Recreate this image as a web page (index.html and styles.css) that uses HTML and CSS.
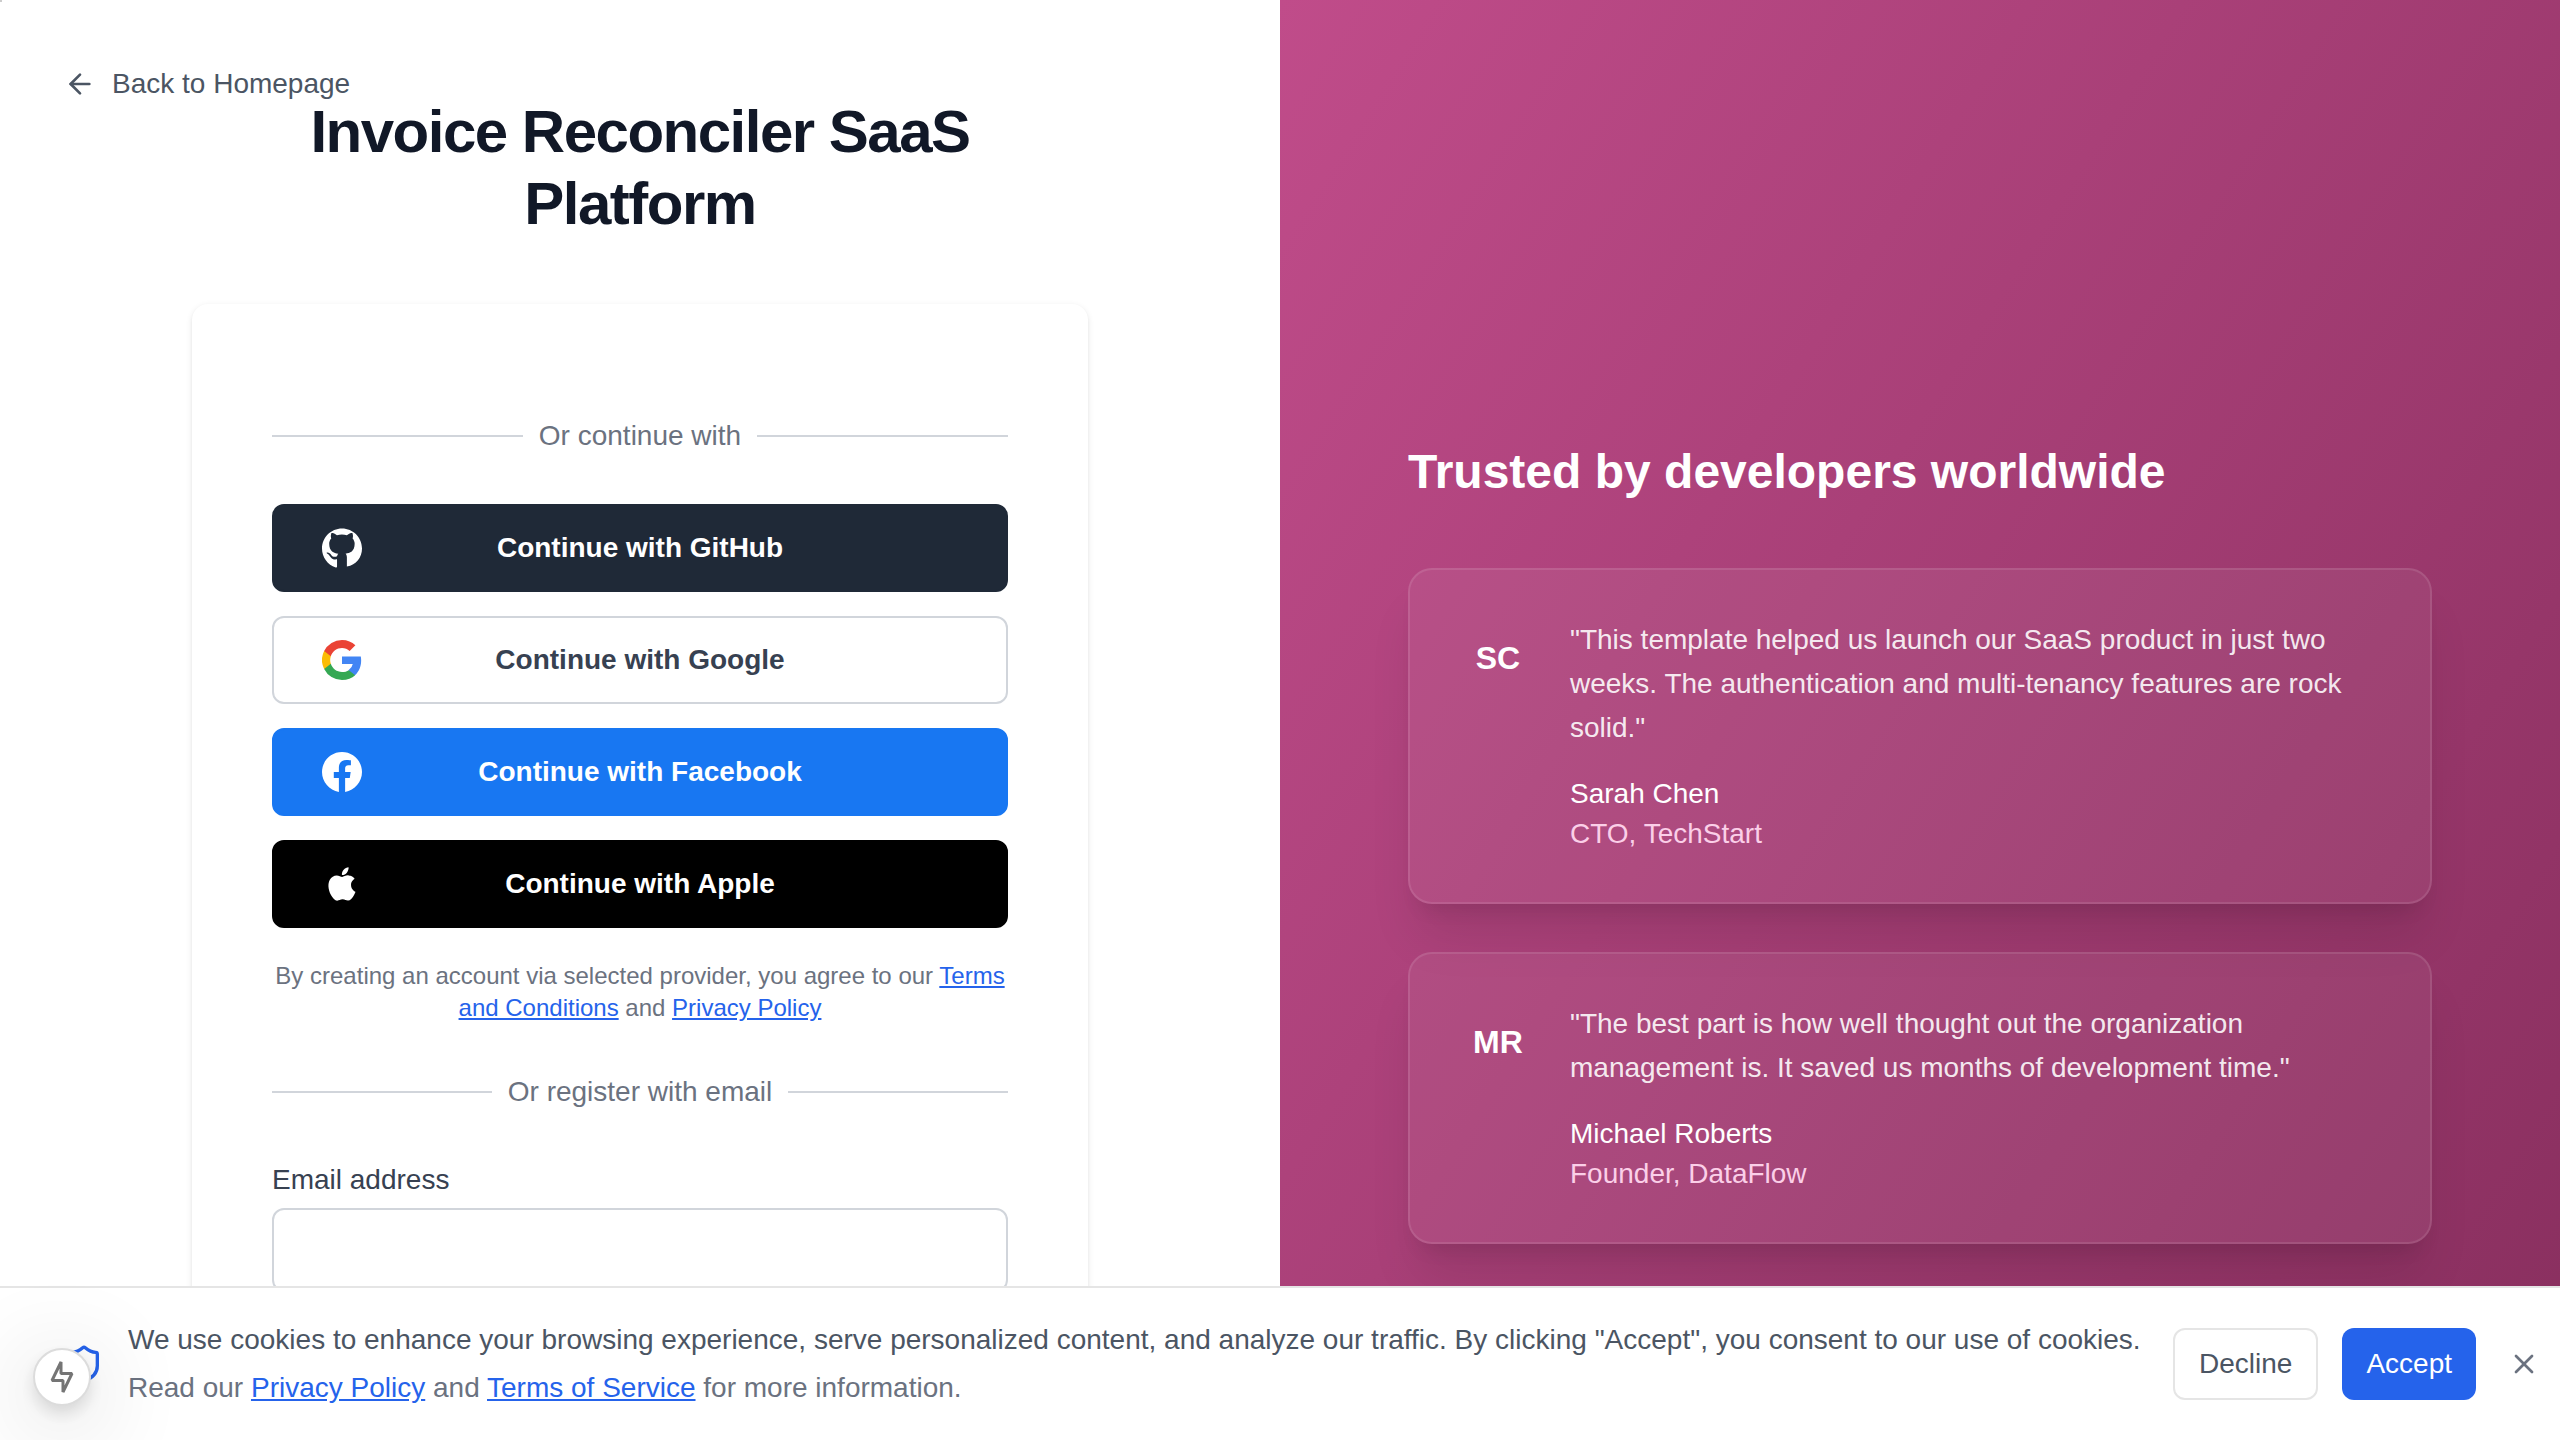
FILE: index.html
```html
<!DOCTYPE html>
<html lang="en">
<head>
<meta charset="utf-8">
<meta name="viewport" content="width=device-width, initial-scale=1">
<title>Invoice Reconciler SaaS Platform</title>
<link rel="stylesheet" href="styles.css">
</head>
<body>
<div class="page">
  <main class="signup">
    <a class="back" href="#">
      <svg class="back-icon" viewBox="0 0 24 24" fill="none" stroke="currentColor" stroke-width="2" stroke-linecap="round" stroke-linejoin="round" aria-hidden="true"><path d="m12 19-7-7 7-7"/><path d="M19 12H5"/></svg>
      Back to Homepage
    </a>
    <h1 class="title">Invoice Reconciler SaaS Platform</h1>
    <section class="card">
      <div class="divider"><span>Or continue with</span></div>
      <div class="providers">
        <button class="provider github" type="button">
          <svg class="provider-icon" viewBox="0 0 24 24" fill="currentColor" aria-hidden="true"><path d="M12 .297c-6.63 0-12 5.373-12 12 0 5.303 3.438 9.8 8.205 11.385.6.113.82-.258.82-.577v-4.3c-1.800.3-3-.2-3.800-1.300-.6-.9-1.200-1.700-2-2.100-.4-.2-.9-.6-.1-.7 1-.1 1.700.5 2.300 1.300.9 1.400 2.200 1.600 3.600 1 .108-.776.417-1.305.76-1.605-2.665-.3-5.466-1.332-5.466-5.93 0-1.31.465-2.38 1.235-3.22-.135-.303-.54-1.523.105-3.176 0 0 1.005-.322 3.3 1.23.96-.267 1.98-.399 3-.405 1.02.006 2.04.138 3 .405 2.28-1.552 3.285-1.23 3.285-1.23.645 1.653.24 2.873.12 3.176.765.84 1.23 1.91 1.23 3.22 0 4.61-2.805 5.625-5.475 5.92.42.36.81 1.096.81 2.22v5.506C20.565 22.092 24 17.592 24 12.297c0-6.627-5.373-12-12-12"/></svg>
          <span class="provider-name">Continue with GitHub</span>
        </button>
        <button class="provider google" type="button">
          <svg class="provider-icon" viewBox="0 0 24 24" aria-hidden="true"><path fill="#4285F4" d="M23.49 12.275c0-.813-.073-1.595-.208-2.346H12v4.437h6.447a5.51 5.51 0 0 1-2.39 3.616v3.006h3.871c2.265-2.086 3.562-5.158 3.562-8.713z"/><path fill="#34A853" d="M12 24c3.24 0 5.956-1.075 7.928-2.912l-3.871-3.006c-1.073.72-2.445 1.145-4.057 1.145-3.126 0-5.772-2.111-6.716-4.948H1.282v3.104A11.995 11.995 0 0 0 12 24z"/><path fill="#FBBC05" d="M5.284 14.279a7.21 7.21 0 0 1 0-4.558V6.617H1.282a12.01 12.01 0 0 0 0 10.766z"/><path fill="#EA4335" d="M12 4.773c1.762 0 3.344.606 4.587 1.795l3.441-3.44C17.951 1.19 15.235 0 12 0A11.995 11.995 0 0 0 1.282 6.617l4.002 3.104C6.228 6.884 8.874 4.773 12 4.773z"/></svg>
          <span class="provider-name">Continue with Google</span>
        </button>
        <button class="provider facebook" type="button">
          <svg class="provider-icon" viewBox="0 0 24 24" fill="currentColor" aria-hidden="true"><path d="M24 12.073c0-6.627-5.373-12-12-12s-12 5.373-12 12c0 5.99 4.388 10.954 10.125 11.854v-8.385H7.078v-3.47h3.047V9.43c0-3.007 1.792-4.669 4.533-4.669 1.312 0 2.686.235 2.686.235v2.953H15.83c-1.491 0-1.956.925-1.956 1.874v2.25h3.328l-.532 3.47h-2.796v8.385C19.612 23.027 24 18.062 24 12.073z"/></svg>
          <span class="provider-name">Continue with Facebook</span>
        </button>
        <button class="provider apple" type="button">
          <svg class="provider-icon" viewBox="0 0 24 24" fill="currentColor" aria-hidden="true"><path d="M18.71 19.5c-.83 1.24-1.71 2.45-3.05 2.47-1.34.03-1.77-.79-3.29-.79-1.53 0-2 .77-3.27.82-1.31.05-2.3-1.32-3.14-2.53C4.25 17 2.94 12.45 4.7 9.39c.87-1.52 2.43-2.48 4.12-2.51 1.28-.02 2.5.87 3.29.87.78 0 2.26-1.07 3.81-.91.65.03 2.47.26 3.64 1.98-.09.06-2.17 1.28-2.15 3.81.03 3.02 2.65 4.03 2.68 4.04-.03.07-.42 1.44-1.38 2.83M13 3.5c.73-.83 1.94-1.46 2.94-1.5.13 1.17-.34 2.35-1.04 3.19-.69.85-1.83 1.51-2.95 1.42-.15-1.15.41-2.35 1.05-3.11z"/></svg>
          <span class="provider-name">Continue with Apple</span>
        </button>
      </div>
      <p class="terms">By creating an account via selected provider, you agree to our <a href="#">Terms and Conditions</a> and <a href="#">Privacy Policy</a></p>
      <div class="divider"><span>Or register with email</span></div>
      <form class="form">
        <label class="label" for="email">Email address</label>
        <input class="input" id="email" type="email" autocomplete="email">
      </form>
    </section>
  </main>

  <aside class="praise">
    <h2 class="praise-title">Trusted by developers worldwide</h2>
    <div class="quotes">
      <article class="quote">
        <div class="avatar">SC</div>
        <div class="quote-body">
          <p class="quote-text">"This template helped us launch our SaaS product in just two weeks. The authentication and multi-tenancy features are rock solid."</p>
          <p class="author">Sarah Chen</p>
          <p class="role">CTO, TechStart</p>
        </div>
      </article>
      <article class="quote">
        <div class="avatar">MR</div>
        <div class="quote-body">
          <p class="quote-text">"The best part is how well thought out the organization management is. It saved us months of development time."</p>
          <p class="author">Michael Roberts</p>
          <p class="role">Founder, DataFlow</p>
        </div>
      </article>
    </div>
  </aside>
</div>

<div class="cookies">
  <svg class="shield" viewBox="0 0 24 24" fill="none" stroke="currentColor" stroke-width="2" stroke-linecap="round" stroke-linejoin="round" aria-hidden="true"><path d="M20 13c0 5-3.500 7.500-7.660 8.950a1 1 0 0 1-.670-.010C7.500 20.500 4 18 4 13V6a1 1 0 0 1 1-1c2 0 4.500-1.200 6.240-2.720a1.170 1.170 0 0 1 1.520 0C14.510 3.810 17 5 19 5a1 1 0 0 1 1 1z"/></svg>
  <div class="cookies-text">
    <p class="cookies-main">We use cookies to enhance your browsing experience, serve personalized content, and analyze our traffic. By clicking "Accept", you consent to our use of cookies.</p>
    <p class="cookies-more">Read our <a href="#">Privacy Policy</a> and <a href="#">Terms of Service</a> for more information.</p>
  </div>
  <div class="cookies-actions">
    <button class="btn decline" type="button">Decline</button>
    <button class="btn accept" type="button">Accept</button>
    <button class="close" type="button" aria-label="Close">
      <svg class="close-icon" viewBox="0 0 24 24" fill="none" stroke="currentColor" stroke-width="2" stroke-linecap="round" stroke-linejoin="round" aria-hidden="true"><path d="M18 6 6 18"/><path d="m6 6 12 12"/></svg>
    </button>
  </div>
</div>

<button class="devtools" type="button" aria-label="Developer tools">
  <svg class="bolt" viewBox="0 0 24 32" fill="none" stroke="currentColor" stroke-width="3" stroke-linejoin="bevel" aria-hidden="true"><path d="M11 1V12.500H22L13 31V19.500H2z"/></svg>
</button>
</body>
</html>
```

FILE: styles.css
```css
* {
  box-sizing: border-box;
  margin: 0;
}

body {
  font-family: "Liberation Sans", Arial, sans-serif;
  font-size: 28px;
  line-height: 40px;
  color: #111827;
  background: #fff;
}

/* Corner marker */
body::before {
  content: "";
  position: fixed;
  top: 0;
  left: 0;
  z-index: 1;
  width: 2px;
  height: 2px;
  background: #ccc;
}

button,
input {
  font: inherit;
  color: inherit;
}

a {
  color: #2563eb;
  text-decoration: underline;
}

/* Two-column page */
.page {
  display: grid;
  grid-template-columns: 1fr 1fr;
  min-height: 140vh;
}

.signup {
  position: relative;
  display: flex;
  flex-direction: column;
  align-items: center;
  gap: 64px;
  padding: 96px 64px;
}

.back {
  position: absolute;
  top: 64px;
  left: 64px;
  display: flex;
  align-items: center;
  gap: 16px;
  color: #4b5563;
  text-decoration: none;
}

.back-icon {
  width: 32px;
  height: 32px;
}

.title {
  width: 100%;
  max-width: 896px;
  font-size: 60px;
  line-height: 72px;
  letter-spacing: -0.025em;
  font-weight: 700;
  text-align: center;
}

.card {
  flex: 1;
  width: 100%;
  max-width: 896px;
  padding: 112px 80px 80px;
  border-radius: 16px;
  background: #fff;
  box-shadow: 0 2px 6px rgba(0, 0, 0, 0.1), 0 2px 4px -2px rgba(0, 0, 0, 0.1);
}

.divider {
  display: flex;
  align-items: center;
  gap: 16px;
  color: #6b7280;
}

.divider::before,
.divider::after {
  content: "";
  flex: 1;
  height: 2px;
  background: #d1d5db;
}

.providers {
  display: grid;
  gap: 24px;
  margin: 48px 0 32px;
}

.provider {
  display: flex;
  align-items: center;
  height: 88px;
  padding: 0 48px;
  border: 2px solid transparent;
  border-radius: 12px;
  font-weight: 700;
  color: #fff;
}

.provider-icon {
  width: 40px;
  height: 40px;
}

.provider-name {
  flex: 1;
  padding-right: 40px;
  text-align: center;
}

.github {
  background: #1f2937;
  border-color: #1f2937;
}

.google {
  background: #fff;
  border-color: #d1d5db;
  color: #374151;
}

.facebook {
  background: #1877f2;
  border-color: #1877f2;
}

.apple {
  background: #000;
  border-color: #000;
}

.terms {
  margin-bottom: 48px;
  font-size: 24px;
  line-height: 32px;
  text-align: center;
  color: #6b7280;
}

.form {
  display: grid;
  gap: 8px;
  margin-top: 48px;
}

.label {
  color: #374151;
}

.input {
  width: 100%;
  height: 84px;
  padding: 16px 24px;
  border: 2px solid #d1d5db;
  border-radius: 12px;
  background: #fff;
}

/* Testimonials */
.praise {
  display: flex;
  flex-direction: column;
  gap: 64px;
  padding: 440px 128px 96px;
  background: linear-gradient(to bottom right, #c04c8a, #7f2a57);
  color: #fff;
}

.praise-title {
  font-size: 48px;
  line-height: 64px;
  font-weight: 700;
}

.quotes {
  display: grid;
  gap: 48px;
}

.quote {
  display: flex;
  align-items: flex-start;
  gap: 32px;
  padding: 48px;
  border: 2px solid rgba(255, 255, 255, 0.1);
  border-radius: 24px;
  background: rgba(255, 255, 255, 0.06);
  box-shadow: 0 40px 50px -10px rgba(0, 0, 0, 0.1), 0 16px 20px -12px rgba(0, 0, 0, 0.1);
}

.avatar {
  width: 80px;
  flex: none;
  font-size: 32px;
  line-height: 80px;
  font-weight: 700;
  text-align: center;
}

.quote-body {
  flex: 1;
}

.quote-text {
  margin-bottom: 24px;
  line-height: 44px;
  color: rgba(255, 255, 255, 0.9);
}

.role {
  color: #fbcfe8;
}

/* Cookie bar */
.cookies {
  position: fixed;
  right: 0;
  bottom: 0;
  left: 0;
  display: flex;
  align-items: center;
  gap: 24px;
  padding: 32px 12px 32px 64px;
  border-top: 2px solid #e5e5e5;
  background: #fff;
}

.shield {
  flex: none;
  width: 40px;
  height: 40px;
  color: #2563eb;
}

.cookies-text {
  flex: 1;
}

.cookies-main {
  color: #4b5563;
}

.cookies-more {
  margin-top: 8px;
  color: #6b7280;
}

.cookies-actions {
  display: flex;
  align-items: center;
  gap: 24px;
}

.btn {
  height: 72px;
  padding: 0 24px;
  border: 0;
  border-radius: 12px;
}

.decline {
  border: 2px solid #e5e5e5;
  background: #fff;
  color: #4b5563;
}

.accept {
  background: #2563eb;
  color: #fff;
}

.close {
  display: flex;
  padding: 8px;
  border: 0;
  background: none;
  color: #6b7280;
}

.close-icon {
  width: 32px;
  height: 32px;
}

.devtools {
  position: fixed;
  bottom: 34px;
  left: 33px;
  display: grid;
  place-items: center;
  width: 58px;
  height: 58px;
  padding: 0;
  border: 2px solid #dcdcdc;
  border-radius: 50%;
  background: #fff;
  color: #757575;
  box-shadow: 0 8px 16px rgba(0, 0, 0, 0.12), 0 16px 96px rgba(0, 0, 0, 0.24);
}

.bolt {
  width: 24px;
  height: 32px;
}
```
